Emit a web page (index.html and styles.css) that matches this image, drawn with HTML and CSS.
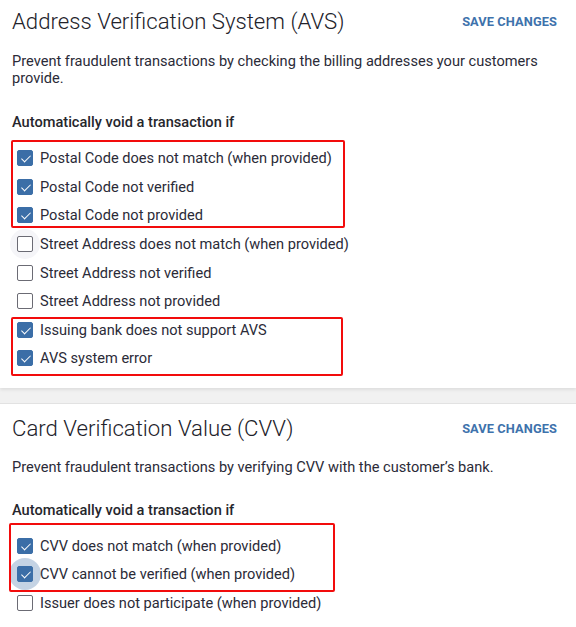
FILE: index.html
```html
<!DOCTYPE html>
<html>
<head>
<meta charset="utf-8">
<link rel="stylesheet" href="styles.css">
</head>
<body>
<section class="card first">
  <div class="head">
    <h2 class="title">Address Verification System (AVS)</h2>
    <button class="save">SAVE CHANGES</button>
  </div>
  <p class="desc">Prevent fraudulent transactions by checking the billing addresses your customers provide.</p>
  <h3 class="label">Automatically void a transaction if</h3>
  <div class="list">
    <div class="mark m1"></div>
    <div class="mark m2"></div>
    <label class="row"><span class="ctl"><span class="box on"></span></span>Postal Code does not match (when provided)</label>
    <label class="row"><span class="ctl"><span class="box on"></span></span>Postal Code not verified</label>
    <label class="row"><span class="ctl"><span class="box on"></span></span>Postal Code not provided</label>
    <label class="row"><span class="ctl faint"><span class="box"></span></span>Street Address does not match (when provided)</label>
    <label class="row"><span class="ctl"><span class="box"></span></span>Street Address not verified</label>
    <label class="row"><span class="ctl"><span class="box"></span></span>Street Address not provided</label>
    <label class="row"><span class="ctl"><span class="box on"></span></span>Issuing bank does not support AVS</label>
    <label class="row"><span class="ctl"><span class="box on"></span></span>AVS system error</label>
  </div>
</section>
<div class="band"></div>
<section class="card second">
  <div class="head">
    <h2 class="title">Card Verification Value (CVV)</h2>
    <button class="save">SAVE CHANGES</button>
  </div>
  <p class="desc">Prevent fraudulent transactions by verifying CVV with the customer’s bank.</p>
  <h3 class="label">Automatically void a transaction if</h3>
  <div class="list">
    <div class="mark m3"></div>
    <label class="row"><span class="ctl"><span class="box on"></span></span>CVV does not match (when provided)</label>
    <label class="row"><span class="ctl halo"><span class="box on"></span></span>CVV cannot be verified (when provided)</label>
    <label class="row"><span class="ctl"><span class="box"></span></span>Issuer does not participate (when provided)</label>
  </div>
</section>
</body>
</html>
```
FILE: styles.css
```css
html, body {
  margin: 0;
  padding: 0;
  background: #fff;
  font-family: Roboto, "Liberation Sans", sans-serif;
  color: #2b2b38;
}
.card {
  background: #fff;
  padding: 0 12px;
}
.first {
  height: 388px;
  box-sizing: border-box;
  padding-top: 4px;
  box-shadow: 0 2px 3px rgba(0,0,0,0.08);
  position: relative;
  z-index: 1;
}
.band {
  height: 15px;
  background: #f1f1f1;
  border-bottom: 1px solid #e2e2e2;
}
.second {
  padding-top: 7px;
  height: 223px;
}
.head {
  display: flex;
  align-items: center;
  justify-content: space-between;
  height: 34px;
}
.title {
  margin: 0;
  font-weight: 300;
  font-size: 22.2px;
  color: #22222a;
}
.save {
  border: 0;
  background: none;
  padding: 0;
  margin-right: 7px;
  font-family: Roboto, "Liberation Sans", sans-serif;
  font-weight: 700;
  font-size: 12.8px;
  color: #3e72ac;
  letter-spacing: 0.1px;
}
.desc {
  margin: 15px 0 0;
  font-size: 14.6px;
  line-height: 16.5px;
  color: #2b2b38;
}
.label {
  margin: 28px 0 0;
  font-size: 14.6px;
  font-weight: 500;
  color: #26262c;
  line-height: 17px;
}
.second .desc { margin-top: 14px; }
.second .label { margin-top: 26px; }
.list {
  position: relative;
  margin-top: 13px;
}
.row {
  display: flex;
  align-items: center;
  height: 28.6px;
  font-size: 14.6px;
  color: #2b2b38;
  padding-left: 5px;
}
.ctl {
  flex: none;
  width: 30px;
  height: 30px;
  margin: 0 0 0 -7px;
  border-radius: 50%;
  display: flex;
  align-items: center;
  justify-content: center;
}
.ctl.faint { background: #f5f5f8; }
.ctl.halo { background: rgba(59,110,167,0.3); width: 32px; height: 32px; margin-left: -8px; margin-right: -1px; }
.box {
  width: 16px;
  height: 16px;
  border: 1px solid #6b6b74;
  border-radius: 2px;
  box-sizing: border-box;
  position: relative;
  background: #fff;
}
.box.on {
  background: #3b6ea7;
  border-color: #3b6ea7;
}
.box.on::after {
  content: "";
  position: absolute;
  left: 3.5px;
  top: 2px;
  width: 8px;
  height: 4px;
  border-left: 1.7px solid #fff;
  border-bottom: 1.7px solid #fff;
  transform: translate(-0.5px, 2px) rotate(-45deg);
}
.mark {
  position: absolute;
  border: 2px solid #f20c0c;
  border-radius: 2px;
  pointer-events: none;
  z-index: 2;
}
.m1 { left: -1px; top: -4px; width: 330px; height: 84px; }
.m2 { left: -1px; top: 173px; width: 328px; height: 55px; }
.m3 { left: -3px; top: -9px; width: 322px; height: 65px; }
```
